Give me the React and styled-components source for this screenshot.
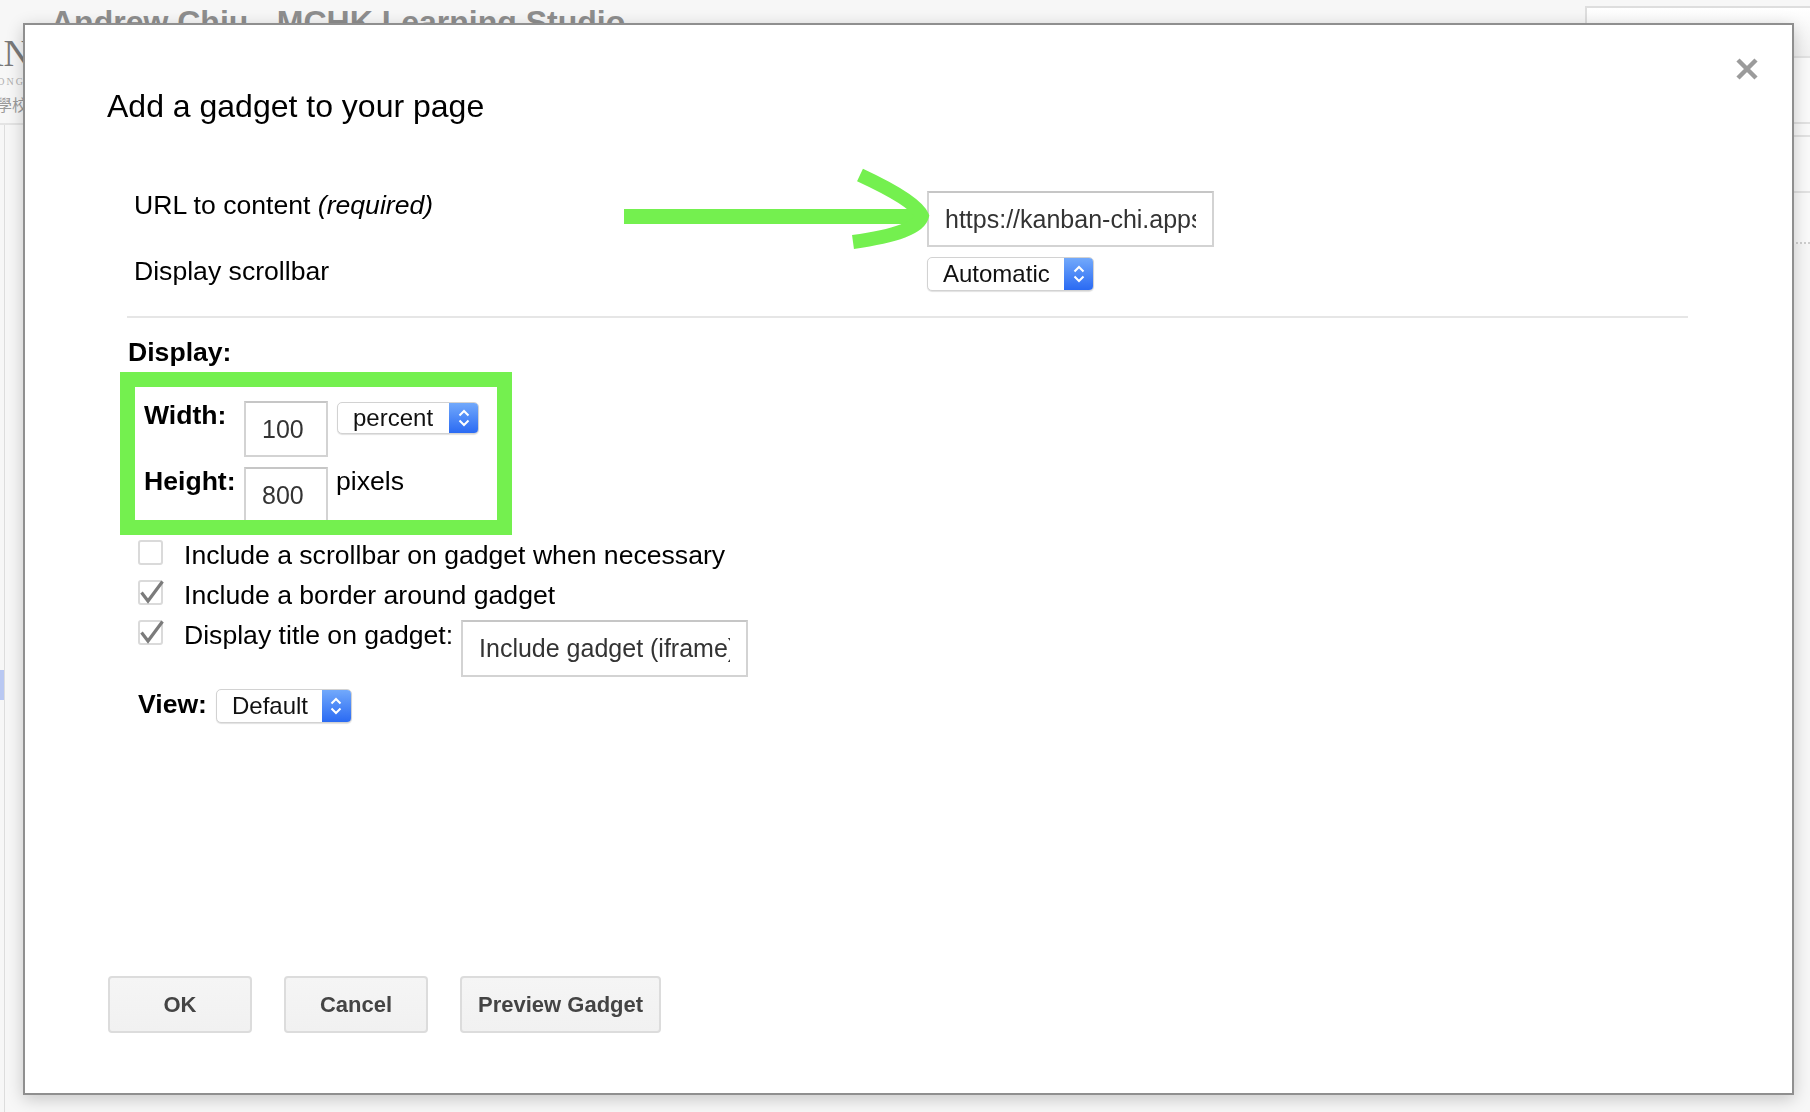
import React from "react";
import styled, { createGlobalStyle } from "styled-components";

const GlobalStyle = createGlobalStyle`
  html, body {
    margin: 0;
    padding: 0;
  }
  body {
    background: #f6f6f6;
    font-family: "Liberation Sans", Arial, sans-serif;
    overflow: hidden;
  }
`;

/* ---------- the site page behind the dialog ---------- */

const Backdrop = styled.div`
  display: flex;
  width: 1810px;
  height: 1112px;
  overflow: hidden;
  background: #f7f7f7;
`;

const SideCol = styled.div`
  width: 40px;
  flex: none;
  display: flex;
  flex-direction: column;
`;

const Logo = styled.div`
  height: 125px;
  box-sizing: border-box;
  padding-top: 34px;
  margin-left: -24px;
  border-bottom: 2px solid #e4e4e4;
  font-family: "Liberation Serif", serif;
  color: #7a7a7a;
  white-space: nowrap;
`;

const LogoMark = styled.div`
  font-size: 38px;
  line-height: 38px;
`;

const LogoSub = styled.div`
  margin-top: 4px;
  padding-left: 12px;
  font-size: 10px;
  line-height: 12px;
  letter-spacing: 2px;
  color: #b0b0b0;
`;

const LogoCjk = styled.div`
  margin-top: 6px;
  padding-left: 20px;
  font-family: "Noto Sans CJK TC", serif;
  font-size: 16px;
  line-height: 20px;
  color: #9a9a9a;
`;

const SideNav = styled.div`
  flex: 1;
  width: 4px;
  border-right: 1px solid #dddddd;
`;

const NavMark = styled.div`
  margin-top: 545px;
  height: 30px;
  background: #b9c8f2;
`;

const Center = styled.div`
  flex: 1;
  padding: 4px 0 0 11px;
`;

const SiteTitle = styled.div`
  font-size: 32px;
  line-height: 36px;
  font-weight: bold;
  color: #8e8e8e;
  white-space: nowrap;
`;

const RightRail = styled.div`
  width: 225px;
  flex: none;
  padding-top: 6px;
`;

const RailBox = styled.div`
  height: ${(p) => p.$h}px;
  box-sizing: border-box;
  background: ${(p) => (p.$top ? "linear-gradient(#ffffff, #f1f1f1)" : "#fafafa")};
  border-left: ${(p) => (p.$top ? "2px solid #dedede" : "none")};
  border-top: ${(p) => (p.$top ? "2px solid #dedede" : "none")};
  border-bottom: 2px ${(p) => (p.$dotted ? "dotted #cfcfcf" : "solid #e2e2e2")};
`;

/* ---------- the dialog ---------- */

const Dialog = styled.div`
  position: fixed;
  left: 23px;
  top: 23px;
  width: 1771px;
  height: 1072px;
  box-sizing: border-box;
  border: 2px solid #8f8f8f;
  background: #fff;
  box-shadow: 0 4px 16px rgba(0, 0, 0, 0.2);
  display: flex;
  flex-direction: column;
  align-items: flex-start;
  color: #000;
`;

const Title = styled.h1`
  margin: 63px 0 0 82px;
  font-size: 32px;
  line-height: 37px;
  font-weight: normal;
`;

const CloseButton = styled.button`
  position: absolute;
  top: 33px;
  right: 34px;
  width: 22px;
  height: 22px;
  padding: 0;
  border: 0;
  background: none;
  display: block;
`;

const FieldGrid = styled.div`
  margin: 65px 0 0 109px;
  display: grid;
  grid-template-columns: 793px auto;
  row-gap: 9px;
  align-items: start;
`;

const FieldLabel = styled.div`
  font-size: 26.6px;
  line-height: 30px;

  em {
    font-style: italic;
  }
`;

const TextBox = styled.input`
  display: block;
  width: ${(p) => p.$w}px;
  height: ${(p) => p.$h}px;
  margin: ${(p) => p.$m || "0"};
  box-sizing: border-box;
  padding: 0 16px;
  border: 2px solid #d3d3d3;
  border-top-color: #c6c6c6;
  border-radius: 0;
  background: #fff;
  font-family: "Liberation Sans", Arial, sans-serif;
  font-size: 25px;
  color: #333;
  outline: none;
`;

const Popup = styled.div`
  display: flex;
  align-items: center;
  width: ${(p) => p.$w}px;
  height: ${(p) => p.$h}px;
  margin: ${(p) => p.$m || "0"};
  box-sizing: border-box;
  border: 1px solid #d2d2d2;
  border-radius: 5px;
  background: #fff;
  box-shadow: 0 1px 1px rgba(0, 0, 0, 0.12);
  overflow: hidden;
  font-size: 24px;
  color: #111;
`;

const PopupValue = styled.span`
  flex: 1;
  padding-left: 15px;
  white-space: nowrap;
`;

const Stepper = styled.span`
  width: 29px;
  height: 100%;
  display: flex;
  align-items: center;
  justify-content: center;
  background: linear-gradient(#72a9fb, #2a6af3);
`;

const Divider = styled.div`
  margin: 25px 0 0 102px;
  width: 1561px;
  height: 2px;
  background: #e6e6e6;
`;

const SectionHead = styled.div`
  margin: 19px 0 0 103px;
  font-size: 26.6px;
  line-height: 30px;
  font-weight: bold;
`;

const SizeGrid = styled.div`
  margin: 34px 0 0 119px;
  display: grid;
  grid-template-columns: 100px 84px auto;
  grid-auto-rows: 56px;
  row-gap: 10px;
  align-items: start;
`;

const SizeLabel = styled.div`
  font-size: 26.6px;
  line-height: 28px;
  font-weight: bold;
`;

const UnitText = styled.div`
  margin-left: 8px;
  font-size: 26.6px;
  line-height: 28px;
`;

const CheckList = styled.div`
  margin: 17px 0 0 113px;
  display: flex;
  flex-direction: column;
  gap: 10px;
`;

const CheckRow = styled.div`
  display: flex;
  align-items: flex-start;
`;

const CheckBox = styled.span`
  position: relative;
  width: 25px;
  height: 25px;
  flex: none;
  box-sizing: border-box;
  border: 2px solid #dadada;
  border-radius: 3px;
  background: #fff;

  svg {
    position: absolute;
    left: -2px;
    top: -2px;
    overflow: visible;
  }
`;

const CheckText = styled.span`
  margin-left: 21px;
  font-size: 26.6px;
  line-height: 30px;
  white-space: nowrap;
`;

const ViewRow = styled.div`
  margin: 12px 0 0 113px;
  display: flex;
  align-items: flex-start;
`;

const ViewLabel = styled.span`
  margin-right: 9px;
  font-size: 26.6px;
  line-height: 30px;
  font-weight: bold;
`;

const ButtonBar = styled.div`
  margin: auto 0 60px 83px;
  display: flex;
  gap: 32px;
`;

const Button = styled.button`
  min-width: 144px;
  height: 57px;
  padding: 0 16px;
  box-sizing: border-box;
  border: 2px solid #dcdcdc;
  border-radius: 4px;
  background: linear-gradient(#f5f5f5, #f1f1f1);
  font-family: "Liberation Sans", Arial, sans-serif;
  font-size: 22px;
  font-weight: bold;
  color: #444;
`;

/* ---------- annotations drawn over the screenshot ---------- */

const ArrowMark = styled.svg`
  position: absolute;
  left: 595px;
  top: 140px;
  pointer-events: none;
`;

const Highlight = styled.div`
  position: absolute;
  left: 95px;
  top: 347px;
  width: 392px;
  height: 163px;
  box-sizing: border-box;
  border: 15px solid #74f04f;
  pointer-events: none;
`;

const GREEN = "#74f04f";

const Chevrons = () => (
  <svg width="14" height="22" viewBox="0 0 14 22">
    <path d="M2.5 8.5 L7 4 L11.5 8.5" fill="none" stroke="#fff" strokeWidth="2" />
    <path d="M2.5 13.5 L7 18 L11.5 13.5" fill="none" stroke="#fff" strokeWidth="2" />
  </svg>
);

const Select = ({ value, w, h, m }) => (
  <Popup $w={w} $h={h} $m={m}>
    <PopupValue>{value}</PopupValue>
    <Stepper>
      <Chevrons />
    </Stepper>
  </Popup>
);

const Check = ({ checked }) => (
  <CheckBox>
    {checked && (
      <svg width="25" height="25" viewBox="0 0 25 25">
        <path d="M3.5 12.5 L10 21 L24.5 1.5" fill="none" stroke="#7b7b7b" strokeWidth="3.2" />
      </svg>
    )}
  </CheckBox>
);

export default function App() {
  return (
    <>
      <GlobalStyle />
      <Backdrop>
        <SideCol>
          <Logo>
            <LogoMark>AN</LogoMark>
            <LogoSub>HONG</LogoSub>
            <LogoCjk>學校</LogoCjk>
          </Logo>
          <SideNav>
            <NavMark />
          </SideNav>
        </SideCol>
        <Center>
          <SiteTitle>Andrew Chiu - MCHK Learning Studio</SiteTitle>
        </Center>
        <RightRail>
          <RailBox $top $h={52} />
          <RailBox $h={66} />
          <RailBox $h={13} />
          <RailBox $h={56} />
          <RailBox $h={51} $dotted />
        </RightRail>
      </Backdrop>

      <Dialog>
        <Title>Add a gadget to your page</Title>
        <CloseButton aria-label="Close">
          <svg width="22" height="22" viewBox="0 0 22 22">
            <path d="M2 2 L20 20 M20 2 L2 20" stroke="#9b9b9b" strokeWidth="4.5" />
          </svg>
        </CloseButton>

        <FieldGrid>
          <FieldLabel>
            URL to content <em>(required)</em>
          </FieldLabel>
          <TextBox readOnly value="https://kanban-chi.appspot.com/" $w={287} $h={56} $m="1px 0 0" />
          <FieldLabel>Display scrollbar</FieldLabel>
          <Select value="Automatic" w={167} h={34} m="1px 0 0" />
        </FieldGrid>

        <Divider />
        <SectionHead>Display:</SectionHead>

        <SizeGrid>
          <SizeLabel>Width:</SizeLabel>
          <TextBox readOnly value="100" $w={84} $h={56} />
          <Select value="percent" w={142} h={32} m="1px 0 0 9px" />
          <SizeLabel>Height:</SizeLabel>
          <TextBox readOnly value="800" $w={84} $h={56} />
          <UnitText>pixels</UnitText>
        </SizeGrid>

        <CheckList>
          <CheckRow>
            <Check />
            <CheckText>Include a scrollbar on gadget when necessary</CheckText>
          </CheckRow>
          <CheckRow>
            <Check checked />
            <CheckText>Include a border around gadget</CheckText>
          </CheckRow>
          <CheckRow>
            <Check checked />
            <CheckText>Display title on gadget:</CheckText>
            <TextBox readOnly value="Include gadget (iframe)" $w={287} $h={57} $m="0 0 0 8px" />
          </CheckRow>
        </CheckList>

        <ViewRow>
          <ViewLabel>View:</ViewLabel>
          <Select value="Default" w={136} h={34} />
        </ViewRow>

        <ButtonBar>
          <Button>OK</Button>
          <Button>Cancel</Button>
          <Button>Preview Gadget</Button>
        </ButtonBar>

        <ArrowMark width="320" height="90" viewBox="0 0 320 90">
          <path d="M4 51.5 L300 51.5" stroke={GREEN} strokeWidth="15" fill="none" />
          <path
            d="M240 10 Q296 36 302 51 Q298 68 233 77"
            stroke={GREEN}
            strokeWidth="14"
            fill="none"
          />
        </ArrowMark>
        <Highlight />
      </Dialog>
    </>
  );
}
